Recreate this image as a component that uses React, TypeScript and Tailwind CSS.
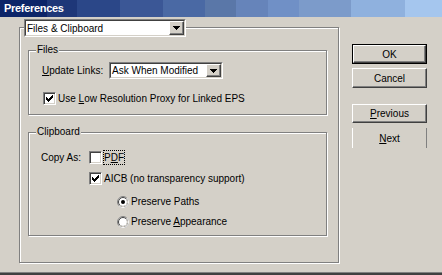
import React from 'react';

const font = { fontFamily: '"Liberation Sans", Arial, sans-serif' };

const CheckMark = () => {
  const tops = [2, 3, 4, 3, 2, 1, 0];
  return (
    <svg width="7" height="7" viewBox="0 0 7 7" shapeRendering="crispEdges">
      {tops.map((y, i) => (
        <rect key={i} x={i} y={y} width="1" height="3" fill="#000" />
      ))}
    </svg>
  );
};

const Checkbox = ({ checked }: { checked?: boolean }) => (
  <span className="w-[13px] h-[13px] shrink-0 bg-white border border-t-[#808080] border-l-[#808080] border-b-white border-r-white shadow-[inset_1px_1px_0_#404040,inset_-1px_-1px_0_#d4d0c8] flex items-center justify-center">
    {checked && <CheckMark />}
  </span>
);

const Radio = ({ checked }: { checked?: boolean }) => (
  <svg width="12" height="12" viewBox="0 0 12 12" className="shrink-0">
    <circle cx="6" cy="6" r="5.5" fill="#fff" stroke="#808080" />
    <path d="M9.89 2.11 A5.5 5.5 0 0 1 2.11 9.89" fill="none" stroke="#fff" />
    <circle cx="6" cy="6" r="4.5" fill="none" stroke="#404040" />
    <path d="M9.18 2.82 A4.5 4.5 0 0 1 2.82 9.18" fill="none" stroke="#d4d0c8" />
    {checked && <circle cx="6" cy="6" r="2" fill="#000" />}
  </svg>
);

const Arrow = () => (
  <svg width="7" height="4" viewBox="0 0 7 4" shapeRendering="crispEdges">
    <rect x="0" y="0" width="7" height="1" fill="#000" />
    <rect x="1" y="1" width="5" height="1" fill="#000" />
    <rect x="2" y="2" width="3" height="1" fill="#000" />
    <rect x="3" y="3" width="1" height="1" fill="#000" />
  </svg>
);

const Select = ({ value, className }: { value: string; className: string }) => (
  <div className={`${className} shrink-0 border border-t-[#808080] border-l-[#808080] border-b-white border-r-white`}>
    <div className="h-full flex bg-white border border-t-[#404040] border-l-[#404040] border-b-[#d4d0c8] border-r-[#d4d0c8]">
      <span className="flex-1 pl-[1px] flex items-center text-black whitespace-nowrap">{value}</span>
      <span className="w-[15px] h-full flex items-center justify-center bg-[#d4d0c8] border border-t-white border-l-white border-b-[#404040] border-r-[#404040] shadow-[inset_-1px_-1px_0_#808080]">
        <Arrow />
      </span>
    </div>
  </div>
);

const GroupBox = ({ title, className, children }: { title: string; className: string; children: React.ReactNode }) => (
  <div className={`${className} relative border border-[#808080] shadow-[inset_1px_1px_0_#fff,1px_1px_0_#fff]`}>
    <span className="absolute left-[7px] top-[-7px] h-[12px] leading-[12px] px-[1px] bg-[#d4d0c8] text-black">{title}</span>
    {children}
  </div>
);

const titleBg =
  'bg-[linear-gradient(to_right,#0c2468_0_47px,#1e3778_47px_77px,#2b4788_77px_120px,#3b5796_120px_163px,#4a69a4_163px_205px,#5a77a8_205px_236px,#6684ba_236px_268px,#7090c6_268px_299px,#7c9bca_299px_351px,#8fb1de_351px_405px,#a5c6ee_405px_442px)]';

const App: React.FC = () => {
  return (
    <div className="w-[442px] h-[275px] bg-[#d4d0c8] flex flex-col overflow-hidden text-[10px] leading-[13px] text-black" style={font}>
      <div className={`h-[17px] shrink-0 pl-[4px] flex items-center text-white font-bold text-[11px] tracking-[-0.3px] ${titleBg}`}>
        Preferences
      </div>

      <div className="flex-1 flex pl-[19px] pt-[10px]">
        <div className="relative w-[320px] h-[236px] border border-[#808080] shadow-[inset_1px_1px_0_#fff,1px_1px_0_#fff] pt-[22px] pl-[8px]">
          <div className="absolute left-[4px] top-[-9px]">
            <Select value="Files & Clipboard" className="w-[162px] h-[18px]" />
          </div>

          <GroupBox title="Files" className="w-[299px] h-[65px]">
            <div className="flex items-center mt-[11px] pl-[13px]">
              <span className="w-[67px]"><span className="underline">U</span>pdate Links:</span>
              <Select value="Ask When Modified" className="w-[114px] h-[17px]" />
            </div>
            <div className="flex items-center mt-[13px] pl-[14px] gap-[2px]">
              <Checkbox checked />
              <span>Use <span className="underline">L</span>ow Resolution Proxy for Linked EPS</span>
            </div>
          </GroupBox>

          <GroupBox title="Clipboard" className="w-[299px] h-[104px] mt-[17px]">
            <div className="flex items-center mt-[17px] pl-[12px]">
              <span className="w-[48px]">Copy As:</span>
              <Checkbox />
              <span className="ml-[1px] px-[1px] outline-1 outline-dotted outline-black -outline-offset-1 leading-[15px]">P<span className="underline">D</span>F</span>
            </div>
            <div className="flex items-center mt-[7px] pl-[60px] gap-[2px]">
              <Checkbox checked />
              <span>AICB (no transparency support)</span>
            </div>
            <div className="flex items-center mt-[10px] pl-[88px] gap-[2px]">
              <Radio checked />
              <span>Preserve Paths</span>
            </div>
            <div className="flex items-center mt-[7px] pl-[88px] gap-[2px]">
              <Radio />
              <span>Preserve <span className="underline">A</span>ppearance</span>
            </div>
          </GroupBox>
        </div>

        <div className="ml-[13px] pt-[17px] flex flex-col w-[75px]">
          <div className="h-[20px] border border-black">
            <div className="h-full flex items-center justify-center border border-t-white border-l-white border-b-[#404040] border-r-[#404040] shadow-[inset_-1px_-1px_0_#808080]">
              OK
            </div>
          </div>
          <div className="mt-[4px] h-[20px] flex items-center justify-center border border-t-white border-l-white border-b-[#404040] border-r-[#404040] shadow-[inset_-1px_-1px_0_#808080]">
            Cancel
          </div>
          <div className="mt-[16px] h-[19px] flex items-center justify-center border border-t-white border-l-white border-b-[#404040] border-r-[#404040] shadow-[inset_-1px_-1px_0_#808080]">
            <span><span className="underline">P</span>revious</span>
          </div>
          <div className="mt-[5px] h-[20px] flex items-center justify-center border-l border-l-white border-r border-r-[#808080]">
            <span><span className="underline">N</span>ext</span>
          </div>
        </div>
      </div>

      <div className="h-[1px] shrink-0 bg-[#808080]" />
      <div className="h-[2px] shrink-0 bg-[#404040]" />
    </div>
  );
};

export default App;
